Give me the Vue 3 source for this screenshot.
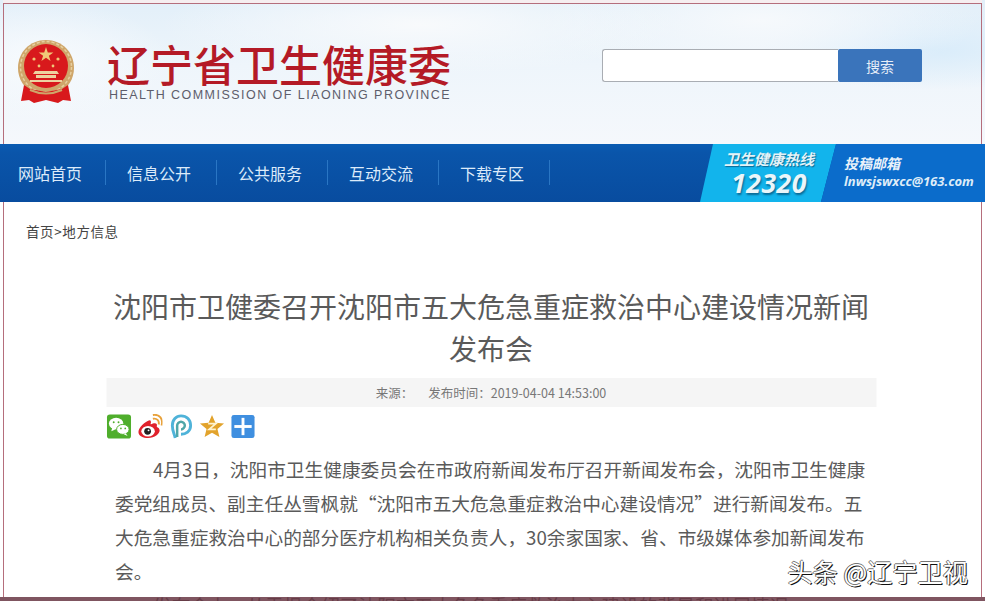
<script setup>
const navItems = ['网站首页', '信息公开', '公共服务', '互动交流', '下载专区']
const paragraphs = [
  '4月3日，沈阳市卫生健康委员会在市政府新闻发布厅召开新闻发布会，沈阳市卫生健康委党组成员、副主任丛雪枫就“沈阳市五大危急重症救治中心建设情况”进行新闻发布。五大危急重症救治中心的部分医疗机构相关负责人，30余家国家、省、市级媒体参加新闻发布会。',
  '发布会上，从雪枫介绍了沈阳市五大危急重症救治中心建设的背景和进展情况'
]
</script>

<template>
  <div class="page">
    <header class="top">
      <div class="brand">
        <svg class="emblem" viewBox="2 1 56 63" aria-hidden="true">
          <path d="M30 1C14 1 2 13 2 29c0 11 6 20 15 25h26c9-5 15-14 15-25C58 13 46 1 30 1z" fill="#cfa66a" />
          <circle cx="30" cy="28" r="25.500" fill="none" stroke="#e6cfa0" stroke-width="1.500" stroke-dasharray="3 2" />
          <circle cx="30" cy="27" r="22" fill="#d8191c" />
          <path d="M30 8l1.800 5.400h5.600l-4.500 3.300 1.700 5.400-4.600-3.300-4.600 3.300 1.700-5.400-4.500-3.300h5.600z" fill="#f0c878" />
          <circle cx="18" cy="20" r="1.600" fill="#f0c878" />
          <circle cx="42" cy="20" r="1.600" fill="#f0c878" />
          <circle cx="23" cy="27" r="1.400" fill="#f0c878" />
          <circle cx="37" cy="27" r="1.400" fill="#f0c878" />
          <path d="M19 32h22l2 3H17zM20 36h20v3H20zM14 41h32v2H14z" fill="#edd2a0" />
          <path d="M8 46l6 4 16 3 16-3 6-4 3 16-8-1-5 3-12-3-12 3-5-3-8 1z" fill="#d8191c" />
          <path d="M14 51q16 7 32 0" stroke="#cfa66a" stroke-width="2" fill="none" />
        </svg>
        <div class="brand-text">
          <div class="brand-name">辽宁省卫生健康委</div>
          <div class="brand-en">HEALTH COMMISSION OF LIAONING PROVINCE</div>
        </div>
      </div>
      <div class="search">
        <input class="search-input" type="text" />
        <button class="search-btn" type="button">搜索</button>
      </div>
    </header>

    <nav class="nav">
      <ul class="nav-list">
        <li v-for="item in navItems" :key="item">{{ item }}</li>
      </ul>
      <div class="nav-side">
        <div class="hotline">
          <span class="hotline-label">卫生健康热线</span>
          <span class="hotline-num">12320</span>
        </div>
        <div class="mailbox">
          <span class="mail-label">投稿邮箱</span>
          <span class="mail-addr">lnwsjswxcc@163.com</span>
        </div>
      </div>
    </nav>

    <div class="crumb">首页&gt;地方信息</div>

    <main class="article">
      <h1 class="title">沈阳市卫健委召开沈阳市五大危急重症救治中心建设情况新闻发布会</h1>
      <div class="meta">
        <span>来源：</span>
        <span>发布时间：2019-04-04 14:53:00</span>
      </div>
      <div class="share">
        <svg viewBox="0 0 26 26" aria-hidden="true">
          <rect x="0.500" y="0.500" width="25" height="25" rx="3" fill="#4fae2c" />
          <ellipse cx="10" cy="10" rx="7.500" ry="6" fill="#fff" />
          <path d="M6 14l-1 4 4-2z" fill="#fff" />
          <ellipse cx="17" cy="16" rx="6.500" ry="5.200" fill="#fff" stroke="#4fae2c" />
          <path d="M20 20l2 3-4-2z" fill="#fff" />
          <circle cx="7.500" cy="8.500" r="1" fill="#4fae2c" />
          <circle cx="12.500" cy="8.500" r="1" fill="#4fae2c" />
          <circle cx="15" cy="15" r="0.900" fill="#4fae2c" />
          <circle cx="19.500" cy="15" r="0.900" fill="#4fae2c" />
        </svg>
        <svg viewBox="0 0 26 26" aria-hidden="true">
          <path d="M11 7C5 10 1 15 1 19c0 4 5 6 10 6 7 0 12-4 12-8 0-3-3-3-3-4 1-3-1-4-4-3-2 1-3 1-2-1 0-3-1-3-3-2z" fill="#e0222c" />
          <ellipse cx="11" cy="18" rx="7" ry="5.500" fill="#fff" />
          <circle cx="10.500" cy="18" r="3.500" fill="#222" />
          <circle cx="11.500" cy="17" r="1" fill="#fff" />
          <path d="M16 5c4-1 7 2 6 6M16 1c7-1 11 4 9 11" fill="none" stroke="#e8a13a" stroke-width="2" />
        </svg>
        <svg viewBox="0 0 26 26" aria-hidden="true">
          <path d="M7 25c-1-5-3-7-3-13C4 6 8 2 13 2c6 0 10 4 10 10s-5 9-10 9" fill="none" stroke="#4fb3d9" stroke-width="3" />
          <path d="M9 24V12c0-2 2-4 4-4s4 2 4 4-2 4-4 4" fill="none" stroke="#4fa6a8" stroke-width="2.600" />
        </svg>
        <svg viewBox="0 0 26 26" aria-hidden="true">
          <path d="M13 1l3.500 8 9 .8-6.800 5.800 2 8.400-7.700-4.500L5.300 24l2-8.400L.5 9.800l9-.8z" fill="#e2a32c" />
          <path d="M9 10h8l-7 6h7" fill="none" stroke="#fff3d0" stroke-width="1.800" />
        </svg>
        <svg viewBox="0 0 26 26" aria-hidden="true">
          <rect x="1" y="1" width="24" height="24" rx="2.500" fill="#3f8fe0" />
          <rect x="11.500" y="4" width="3" height="18" fill="#fff" />
          <rect x="4" y="11.500" width="18" height="3" fill="#fff" />
        </svg>
      </div>
      <div class="body">
        <p v-for="(text, i) in paragraphs" :key="i">{{ text }}</p>
      </div>
    </main>

    <div class="frame"></div>
    <div class="watermark">头条 @辽宁卫视</div>
  </div>
</template>

<style>
html,
body {
  margin: 0;
  background: #fff;
}
</style>

<style scoped>
.page {
  position: relative;
  width: 985px;
  height: 601px;
  overflow: hidden;
  background: #fff;
  font-family: "Noto Sans CJK SC", "Liberation Sans", sans-serif;
}

.top {
  display: flex;
  justify-content: space-between;
  align-items: flex-start;
  height: 144px;
  box-sizing: border-box;
  padding: 40px 63px 0 17px;
  background:
    radial-gradient(ellipse 130px 60px at 40px 60px, #f7fafd 0%, transparent 100%),
    radial-gradient(ellipse 260px 50px at 420px 25px, #f8fafc 0%, transparent 100%),
    radial-gradient(ellipse 220px 60px at 760px 20px, #f6f9fc 0%, transparent 100%),
    radial-gradient(ellipse 170px 40px at 930px 50px, #d9ecfa 0%, transparent 100%),
    linear-gradient(180deg, #e2eff9 0%, #eef5fb 45%, #f5f8fc 100%);
}

.brand {
  display: flex;
  align-items: flex-start;
  gap: 32px;
}

.emblem {
  width: 58px;
  height: 63px;
}

.brand-text {
  margin-top: 2px;
}

.brand-name {
  font-size: 43px;
  line-height: 43px;
  font-weight: 500;
  color: #b41a26;
  white-space: nowrap;
}

.brand-en {
  margin: 2px 0 0 2px;
  font-family: "Liberation Sans", sans-serif;
  font-size: 12.500px;
  line-height: 16px;
  letter-spacing: 1.460px;
  color: #5d5d6b;
  white-space: nowrap;
}

.search {
  display: flex;
  margin-top: 9px;
}

.search-input {
  width: 236px;
  height: 33px;
  box-sizing: border-box;
  padding: 0;
  border: 1px solid #a9adb3;
  border-right: none;
  border-radius: 3px 0 0 3px;
  background: #fff;
}

.search-btn {
  width: 84px;
  height: 33px;
  padding: 0;
  border: none;
  border-radius: 2px;
  background: #3a74bb;
  color: #e6eef8;
  font: 14px "Noto Sans CJK SC", sans-serif;
}

.nav {
  position: relative;
  z-index: 1;
  display: flex;
  justify-content: space-between;
  height: 58px;
  background: linear-gradient(180deg, #0a5cb2 0%, #0a55aa 15%, #084c9f 100%);
}

.nav-list {
  display: flex;
  margin: 0;
  padding: 0;
  list-style: none;
}

.nav-list li {
  position: relative;
  width: 111px;
  box-sizing: border-box;
  padding: 17px 5px 0 0;
  font-size: 16px;
  line-height: 24px;
  text-align: center;
  color: #dcebfa;
}

.nav-list li:first-child {
  width: 106px;
  padding-left: 18px;
  padding-right: 0;
  text-align: left;
}

.nav-list li::after {
  content: "";
  position: absolute;
  right: 0;
  top: 16px;
  width: 1px;
  height: 25px;
  background: #2a76c4;
}

.nav-side {
  display: flex;
  color: #fff;
  font-style: italic;
}

.hotline {
  display: flex;
  flex-direction: column;
  align-items: center;
  width: 136px;
  box-sizing: border-box;
  padding: 5px 0 0 2px;
  background: #12b4ec;
  clip-path: polygon(13px 0, 100% 0, calc(100% - 15px) 100%, 0 100%);
}

.hotline-label {
  font-size: 15px;
  line-height: 19px;
  font-weight: 700;
  color: #e4f3f8;
  text-shadow: 1px 1px 1px #0a6a96;
}

.hotline-num {
  font-family: "Open Sans", "Liberation Sans", sans-serif;
  font-size: 26.500px;
  line-height: 30px;
  font-weight: 700;
  letter-spacing: 0.500px;
  color: #eaf6fa;
  text-shadow: 1px 2px 2px #0a6a96;
}

.mailbox {
  display: flex;
  flex-direction: column;
  width: 164px;
  margin-left: -15px;
  box-sizing: border-box;
  padding: 9px 0 0 23px;
  background: #0b6ccb;
  clip-path: polygon(15px 0, 100% 0, 100% 100%, 0 100%);
}

.mail-label {
  font-size: 14px;
  line-height: 20px;
  font-weight: 700;
  color: #e8f1fa;
}

.mail-addr {
  font-family: "Open Sans", "Liberation Sans", sans-serif;
  font-size: 13px;
  line-height: 17px;
  font-weight: 700;
  color: #dfecf8;
  white-space: nowrap;
}

.crumb {
  padding: 19px 0 0 26px;
  font-size: 13.500px;
  line-height: 20px;
  letter-spacing: 0.600px;
  color: #444;
}

.article {
  width: 770px;
  margin: 0 auto;
  transform: translateX(-1.500px);
}

.title {
  margin: 44px 0 0;
  font-size: 28px;
  line-height: 42px;
  font-weight: 400;
  text-align: center;
  color: #5a5a5a;
}

.meta {
  display: flex;
  justify-content: center;
  gap: 15px;
  height: 29px;
  margin-top: 9px;
  font-size: 12.500px;
  line-height: 30px;
  color: #777;
  background: #f5f5f5;
}

.share {
  display: flex;
  gap: 6px;
  height: 24px;
  margin-top: 7px;
}

.share svg {
  width: 25px;
  height: 25px;
}

.body {
  width: 752px;
  margin: 14px 0 0 9px;
  font-size: 18.700px;
  line-height: 34px;
  color: #5a5a5a;
}

.body p {
  margin: 0;
  text-indent: 38px;
}

.frame {
  position: absolute;
  left: 3px;
  top: 3px;
  right: 3px;
  height: 594px;
  box-sizing: border-box;
  border: 1px solid #b56e7c;
  border-bottom: none;
  pointer-events: none;
  box-shadow: 0 -3px 0 #f6eef0;
}

.frame::after {
  content: "";
  position: absolute;
  left: -4px;
  right: -4px;
  top: 593px;
  height: 4px;
  background: rgba(105, 55, 68, 0.85);
}

.watermark {
  position: absolute;
  right: 17px;
  bottom: 15px;
  font-size: 25.200px;
  line-height: 30px;
  color: #fff;
  white-space: nowrap;
  text-shadow: 1px 1px 0 #111, -1px 0 0 #666, 0 -1px 0 #777;
}
</style>
